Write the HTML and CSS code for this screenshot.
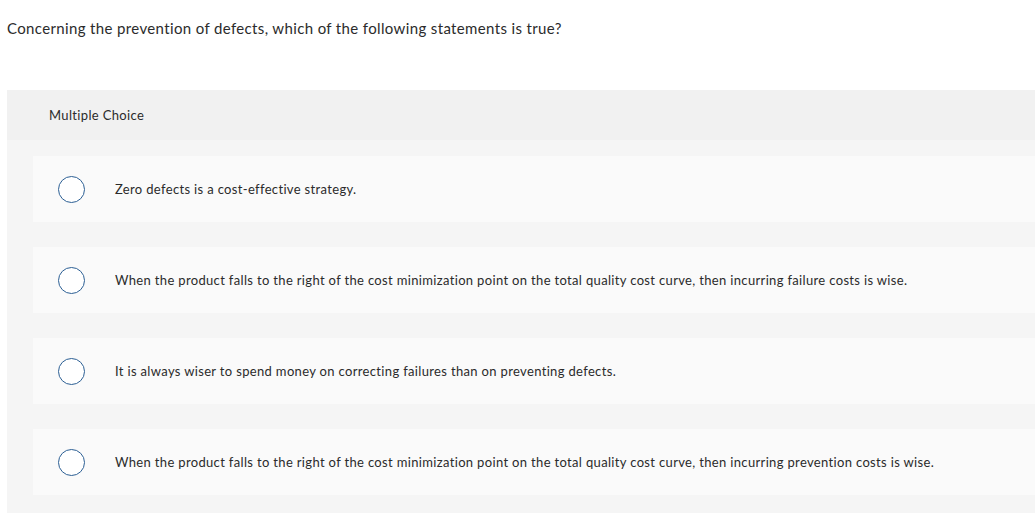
FILE: index.html
```html
<!DOCTYPE html>
<html>
<head>
<meta charset="utf-8">
<link rel="stylesheet" href="styles.css">
</head>
<body>
<p class="question">Concerning the prevention of defects, which of the following statements is true?</p>
<div class="panel">
  <div class="panel-head">Multiple Choice</div>
  <div class="options">
    <div class="option"><span class="radio"></span><span class="label">Zero defects is a cost-effective strategy.</span></div>
    <div class="option"><span class="radio"></span><span class="label">When the product falls to the right of the cost minimization point on the total quality cost curve, then incurring failure costs is wise.</span></div>
    <div class="option"><span class="radio"></span><span class="label">It is always wiser to spend money on correcting failures than on preventing defects.</span></div>
    <div class="option"><span class="radio"></span><span class="label">When the product falls to the right of the cost minimization point on the total quality cost curve, then incurring prevention costs is wise.</span></div>
  </div>
</div>
</body>
</html>
```
FILE: styles.css
```css
html, body {
  margin: 0;
  padding: 0;
  background: #ffffff;
  overflow: hidden;
}
body {
  font-family: "Lato", "Liberation Sans", sans-serif;
  color: #2b2b2b;
  width: 1035px;
}
.question {
  margin: 0;
  padding: 18px 0 0 7px;
  font-size: 15px;
  line-height: 20px;
  height: 72px;
  letter-spacing: 0.36px;
}
.panel {
  margin-left: 7px;
  width: 1060px;
  background: #f5f5f5;
  padding-bottom: 40px;
}
.panel-head {
  background: #f1f1f1;
  height: 50px;
  display: flex;
  align-items: center;
  padding-left: 42px;
  font-size: 13px;
  letter-spacing: 0.34px;
}
.options {
  display: flex;
  flex-direction: column;
  gap: 25px;
  padding: 16px 0 0 26px;
}
.option {
  background: #fafafa;
  height: 66px;
  display: flex;
  align-items: center;
  padding-left: 25px;
  font-size: 13px;
  letter-spacing: 0.34px;
}
.radio {
  width: 25px;
  height: 25px;
  border: 1.5px solid #2c5f94;
  border-radius: 50%;
  background: #ffffff;
  flex: none;
}
.label {
  margin-left: 30px;
}
```
